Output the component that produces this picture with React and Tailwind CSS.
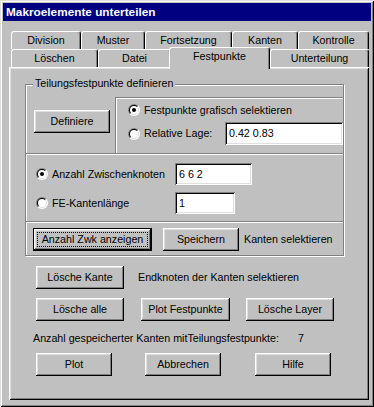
// Makroelemente unterteilen — Win95-style tab dialog

const raised =
  'bg-[#c0c0c0] shadow-[inset_-1px_-1px_#000,inset_1px_1px_#fff,inset_-2px_-2px_#808080,inset_2px_2px_#dfdfdf]'
const sunken =
  'bg-white shadow-[inset_1px_1px_#808080,inset_-1px_-1px_#fff,inset_2px_2px_#000,inset_-2px_-2px_#dfdfdf]'

function Btn({ className = '', children }) {
  return (
    <div className={`flex items-center justify-center h-[23px] shrink-0 ${raised} ${className}`}>
      {children}
    </div>
  )
}

function DefaultBtn({ className = '', children }) {
  return (
    <div
      className={`flex h-[23px] shrink-0 p-[3px] border border-black ${raised} ${className}`}
    >
      <div className="flex-1 flex items-center justify-center border border-dotted border-black">
        {children}
      </div>
    </div>
  )
}

function Field({ className = '', value }) {
  return (
    <div className={`flex items-center shrink-0 pl-[4px] ${sunken} ${className}`}>
      {value}
    </div>
  )
}

function Radio({ on }) {
  return (
    <svg width="12" height="12" viewBox="0 0 12 12" className="shrink-0">
      <defs>
        <clipPath id="rtl">
          <polygon points="0,0 12,0 0,12" />
        </clipPath>
        <clipPath id="rbr">
          <polygon points="12,0 12,12 0,12" />
        </clipPath>
      </defs>
      <circle cx="6" cy="6" r="6" fill="#808080" clipPath="url(#rtl)" />
      <circle cx="6" cy="6" r="6" fill="#fff" clipPath="url(#rbr)" />
      <circle cx="6" cy="6" r="5" fill="#000" clipPath="url(#rtl)" />
      <circle cx="6" cy="6" r="5" fill="#dfdfdf" clipPath="url(#rbr)" />
      <circle cx="6" cy="6" r="4" fill="#fff" />
      {on && <circle cx="6" cy="6" r="2" fill="#000" />}
    </svg>
  )
}

function Tab({ className = '', children }) {
  return (
    <div
      className={`flex justify-center items-start pt-[2px] h-[18px] shrink-0 bg-[#c0c0c0] border-l border-t border-white border-r border-r-black rounded-t-[3px] shadow-[inset_-1px_0_#808080] leading-[13px] ${className}`}
    >
      {children}
    </div>
  )
}

function Etch() {
  return (
    <>
      <div className="h-px bg-[#808080]" />
      <div className="h-px bg-white" />
    </>
  )
}

export default function App() {
  return (
    <div className="w-[374px] h-[407px] p-[3px] flex flex-col bg-[#c0c0c0] text-black text-[10.7px] leading-[13px] font-['Liberation_Sans',Arial,sans-serif] shadow-[inset_1px_1px_#dfdfdf,inset_-1px_-1px_#000,inset_2px_2px_#fff,inset_-2px_-2px_#808080]">
      {/* title bar */}
      <div className="h-[18px] flex items-center pl-[3px] bg-[#000080] text-white font-bold text-[11.8px]">
        Makroelemente unterteilen
      </div>

      {/* tabs */}
      <div className="mt-[10px] ml-[8px] w-[358px] flex flex-col">
        <div className="flex h-[18px]">
          <Tab className="w-[70px]">Division</Tab>
          <Tab className="w-[64px]">Muster</Tab>
          <Tab className="w-[87px]">Fortsetzung</Tab>
          <Tab className="w-[66px]">Kanten</Tab>
          <Tab className="w-[71px]">Kontrolle</Tab>
        </div>
        <div className="flex items-start h-[18px]">
          <Tab className="w-[87px]">Löschen</Tab>
          <Tab className="w-[73px]">Datei</Tab>
          <div className="relative z-10 -mt-[2px] -ml-[2px] w-[101px] h-[22px] shrink-0 flex justify-center pt-[2px] bg-[#c0c0c0] border-l border-t border-white border-r border-r-black rounded-t-[3px] shadow-[inset_-1px_0_#808080]">
            Festpunkte
          </div>
          <Tab className="w-[99px]">Unterteilung</Tab>
        </div>
      </div>

      {/* tab page */}
      <div className="ml-[6px] w-[360px] h-[333px] flex flex-col shadow-[inset_1px_1px_#fff,inset_-1px_-1px_#000,inset_2px_2px_#dfdfdf,inset_-2px_-2px_#808080]">
        <div className="relative ml-[16px] mt-[17px] w-[319px] h-[172px] flex flex-col border border-[#808080] shadow-[inset_1px_1px_#fff,1px_1px_#fff]">
          <span className="absolute left-[7px] -top-[8px] px-[2px] bg-[#c0c0c0]">
            Teilungsfestpunkte definieren
          </span>

          <div className="h-[68px] flex">
            <div className="w-[89px] pl-[8px] pt-[25px] shrink-0">
              <Btn className="w-[76px]">Definiere</Btn>
            </div>
            <div className="mt-[12px] flex-1 flex flex-col border-t border-l border-[#808080] shadow-[inset_1px_1px_#fff]">
              <div className="h-[24px] flex items-center pl-[12px]">
                <Radio on />
                <span className="ml-[4px]">Festpunkte grafisch selektieren</span>
              </div>
              <div className="h-[23px] flex items-center pl-[12px]">
                <div className="w-[97px] flex items-center">
                  <Radio />
                  <span className="ml-[4px]">Relative Lage:</span>
                </div>
                <Field className="w-[118px] h-[23px]" value="0.42 0.83" />
              </div>
            </div>
          </div>
          <Etch />

          <div className="h-[66px] flex flex-col pl-[10px]">
            <div className="mt-[8px] h-[22px] flex items-center">
              <div className="w-[139px] flex items-center">
                <Radio on />
                <span className="ml-[4px]">Anzahl Zwischenknoten</span>
              </div>
              <Field className="w-[77px] h-[22px]" value="6 6 2" />
            </div>
            <div className="mt-[7px] h-[22px] flex items-center">
              <div className="w-[139px] flex items-center">
                <Radio />
                <span className="ml-[4px]">FE-Kantenlänge</span>
              </div>
              <Field className="w-[60px] h-[22px]" value="1" />
            </div>
          </div>
          <Etch />

          <div className="flex-1 pt-[5px] pl-[7px]">
            <div className="h-[23px] flex items-center">
              <DefaultBtn className="w-[119px]">Anzahl Zwk anzeigen</DefaultBtn>
              <Btn className="w-[76px] ml-[11px]">Speichern</Btn>
              <span className="ml-[5px]">Kanten selektieren</span>
            </div>
          </div>
        </div>

        <div className="mt-[10px] ml-[27px] h-[23px] flex items-center">
          <Btn className="w-[88px]">Lösche Kante</Btn>
          <span className="ml-[14px]">Endknoten der Kanten selektieren</span>
        </div>

        <div className="mt-[9px] ml-[27px] h-[23px] flex items-center">
          <Btn className="w-[88px]">Lösche alle</Btn>
          <Btn className="w-[89px] ml-[17px]">Plot Festpunkte</Btn>
          <Btn className="w-[88px] ml-[16px]">Lösche Layer</Btn>
        </div>

        <div className="mt-[10px] ml-[24px] h-[14px] flex items-center">
          <span className="w-[265px] shrink-0">Anzahl gespeicherter Kanten mitTeilungsfestpunkte:</span>
          <span>7</span>
        </div>

        <div className="mt-[8px] ml-[27px] h-[23px] flex items-center">
          <Btn className="w-[76px]">Plot</Btn>
          <Btn className="w-[76px] ml-[33px]">Abbrechen</Btn>
          <Btn className="w-[76px] ml-[34px]">Hilfe</Btn>
        </div>
      </div>
    </div>
  )
}
